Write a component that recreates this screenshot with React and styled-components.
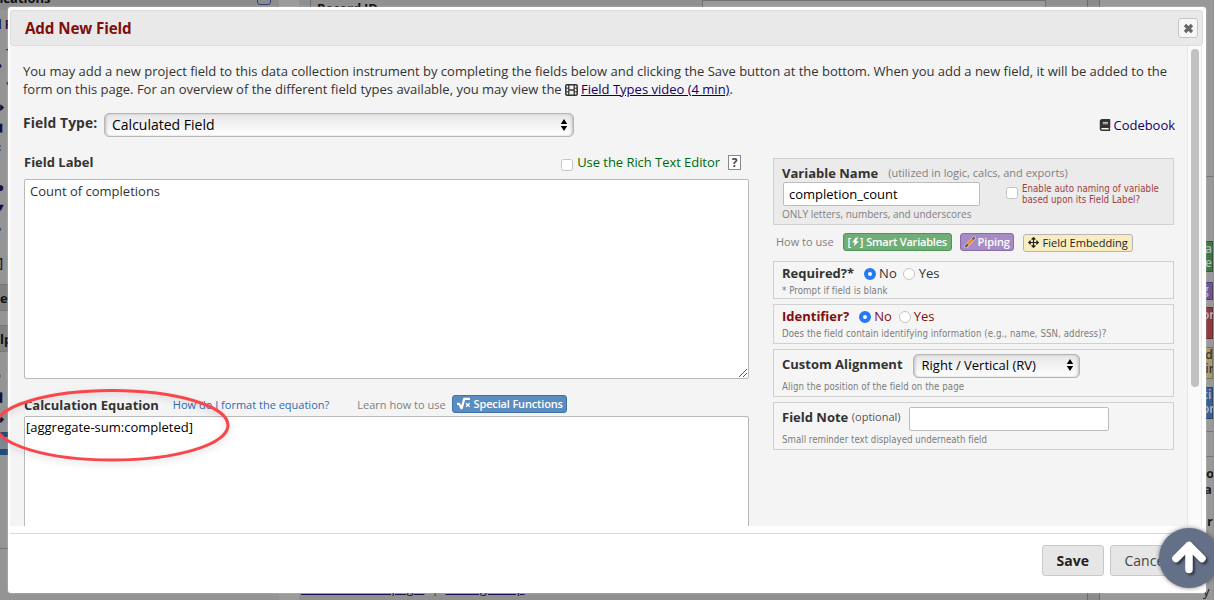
import React from "react";
import styled, { createGlobalStyle, css } from "styled-components";
import { FaBook, FaArrowsAlt, FaSquareRootAlt } from "react-icons/fa";

const Global = createGlobalStyle`
  * { box-sizing: border-box; }
  html, body { margin: 0; height: 600px; overflow: hidden; }
  body { font: 13px/18px "Open Sans", "Noto Sans", sans-serif; color: #333; background: #919191; }
`;

const Screen = styled.div`
  position: relative;
  width: 1214px;
  height: 600px;
  overflow: hidden;
`;

/* Dimmed page behind the dialog */
const Page = styled.div`
  display: flex;
  height: 600px;
  background: #909090;
`;
const Sidebar = styled.aside`
  width: 279px;
  height: 600px;
  overflow: hidden;
  display: flex;
  flex-direction: column;
  background: #949494;
`;
const SideTop = styled.div`
  display: flex;
  justify-content: space-between;
  height: 10px;
  padding-right: 8px;
  background: #8c8c8c;
  font-weight: 700;
  color: #111;
  line-height: 18px;
`;
const Applications = styled.span`
  margin: -11px 0 0 -30px;
`;
const Tick = styled.span`
  width: 14px;
  height: 14px;
  margin-top: -9px;
  border: 1px solid #3c3c80;
  border-radius: 3px;
`;
const SideItem = styled.div`
  height: ${(p) => p.$h}px;
  line-height: ${(p) => p.$h}px;
  margin-left: ${(p) => p.$left || 0}px;
  font-size: ${(p) => p.$size || 11}px;
  font-weight: 700;
  white-space: nowrap;
  color: ${(p) => p.$color || "#17103f"};
`;
const SideHeader = styled.div`
  height: 27px;
  margin-bottom: 14px;
  border: solid #777;
  border-width: 1px 0;
  background: #818181;
  color: #111;
  font-weight: 700;
  line-height: 26px;
`;
const SideBanner = styled.div`
  height: 23px;
  border: solid #244c78;
  border-width: 5px 0 6px;
  background: #7f8b99;
`;
const SideFoot = styled.div`
  height: 94px;
  border-bottom: 1px solid #777;
`;
const Gutter = styled.div`
  width: 20px;
  background: #9b9b9b;
`;
const PageMain = styled.main`
  width: 789px;
  padding-left: 11px;
  display: flex;
  flex-direction: column;
  justify-content: space-between;
`;
const RecordRow = styled.div`
  height: 12px;
  overflow: hidden;
  display: flex;
  justify-content: space-between;
  padding: 0 42px 0 6px;
  border-left: 1px solid #6a6a6a;
  color: #111;
  font-weight: 700;
  line-height: 16px;
  letter-spacing: -0.2px;
`;
const RecordInput = styled.span`
  width: 344px;
  height: 20px;
  border: 1px solid #707070;
  background: #999;
`;
const PageLinks = styled.div`
  display: flex;
  gap: 7px;
  height: 12px;
  overflow: hidden;
  line-height: 0;
  margin-left: -9px;
  a { color: #140b51; text-decoration: underline; }
`;
const RightCol = styled.aside`
  width: 126px;
  margin-left: -1px;
  border-left: 1px solid #6a6a6a;
  background: #999;
  display: flex;
`;
const RightStripe = styled.div`
  width: 12px;
  border-right: 1px solid #6a6a6a;
  background: #8c8c8c;
`;
const RightBody = styled.div`
  flex: 1;
  display: flex;
  flex-direction: column;
  overflow: hidden;
`;
const RightRule = styled.div`
  border-bottom: 1px solid #757575;
  height: ${(p) => p.$h}px;
`;
const RightTag = styled.div`
  margin: ${(p) => p.$gap}px 0 0 90px;
  padding-left: ${(p) => p.$pl || 11}px;
  height: ${(p) => p.$h}px;
  border: 1px solid rgba(0, 0, 0, 0.25);
  background: ${(p) => p.$bg};
  color: ${(p) => p.$color || "#b7b7b7"};
  font-size: 12px;
  font-weight: 600;
  line-height: 14px;
  white-space: pre;
`;
const RightText = styled.div`
  padding-left: ${(p) => p.$left}px;
  height: ${(p) => p.$h}px;
  color: #1b1b1b;
  font-weight: ${(p) => p.$weight || 700};
`;
const RightTexts = styled.div`
  padding-top: 7px;
`;

/* Dialog */
const Dialog = styled.section`
  position: absolute;
  left: 8px;
  top: 7px;
  width: 1198px;
  height: 586px;
  padding: 3px 2px;
  border-radius: 3px;
  background: #fff;
  box-shadow: 0 0 2px rgba(255, 255, 255, 0.5);
  display: flex;
  flex-direction: column;
`;
const TitleBar = styled.header`
  width: 1193px;
  height: 36px;
  padding: 0 4px 0 14px;
  display: flex;
  align-items: center;
  justify-content: space-between;
  border: 1px solid #dcdcdc;
  border-radius: 3px;
  background: #e9e9e9;
`;
const Title = styled.h1`
  margin: 0;
  font-size: 15.2px;
  line-height: 20px;
  font-weight: 700;
  letter-spacing: -0.12px;
  color: #7e0f0d;
`;
const Close = styled.button`
  width: 20px;
  height: 20px;
  padding: 0;
  display: grid;
  place-items: center;
  border: 1px solid #c5c5c5;
  border-radius: 3px;
  background: #f6f6f6;
`;
const Scroller = styled.div`
  display: flex;
  width: 1192px;
  height: 480px;
  overflow: hidden;
  border-right: 1px solid #e8e8e8;
`;
const Content = styled.div`
  width: 1177px;
  padding: 16px 13px 0;
  background: #f4f4f4;
`;
const Track = styled.div`
  width: 14px;
  padding: 3px 2px 0 3px;
  border-left: 1px solid #e8e8e8;
  background: #fafafa;
`;
const Thumb = styled.div`
  width: 8px;
  height: 338px;
  border-radius: 4px;
  background: #c1c1c1;
`;
const Intro = styled.p`
  margin: 0;
  width: 1155px;
  white-space: nowrap;
  letter-spacing: ${(p) => p.$ls || 0}px;
  svg { vertical-align: -1.5px; margin-right: 3px; }
`;
const Link = styled.a`
  color: #100066;
  text-decoration: ${(p) => (p.$plain ? "none" : "underline")};
`;
const TypeRow = styled.div`
  display: flex;
  align-items: flex-start;
  height: 55px;
  padding-top: 15px;
`;
const TypeLabel = styled.label`
  width: 81px;
  padding-top: 1px;
  font-size: 13.8px;
  letter-spacing: 0.1px;
  font-weight: 700;
  white-space: nowrap;
`;
const Select = styled.div`
  width: ${(p) => p.$w}px;
  height: 24px;
  margin: ${(p) => p.$m || 0};
  padding: ${(p) => p.$pad || "0 5px 1px 7px"};
  display: flex;
  align-items: center;
  justify-content: space-between;
  border: 1px solid #b5b5b5;
  border-radius: 5px;
  background: linear-gradient(#e6e6e6, #fff);
  box-shadow: inset 2px 0 3px -1px #bbb, inset -2px 0 3px -1px #bbb;
  color: #000;
  font-size: ${(p) => p.$size || 13}px;
  white-space: nowrap;
`;
const Codebook = styled.div`
  margin: 0 -1px 0 auto;
  padding-top: 3px;
  display: flex;
  align-items: center;
  gap: 3px;
  letter-spacing: -0.03px;
  svg { font-size: 12px; }
`;
const Columns = styled.div`
  display: flex;
  align-items: flex-start;
  justify-content: space-between;
  padding-left: 1px;
`;
const Left = styled.div`
  width: 725px;
`;
const Right = styled.div`
  width: 401px;
  padding-top: 5px;
`;
const LabelRow = styled.div`
  display: flex;
  height: 26px;
  line-height: 18px;
`;
const Strong = styled.b`
  font-weight: 700;
  white-space: nowrap;
`;
const Rich = styled.label`
  display: flex;
  margin-left: auto;
  gap: 4px;
  color: #006a0c;
  letter-spacing: -0.05px;
`;
const Help = styled.span`
  width: 13px;
  height: 15px;
  margin: 2px 8px 0 8px;
  border: 1px solid #888;
  background: #fff;
  color: #444;
  font-size: 12px;
  font-weight: 700;
  line-height: 13px;
  text-align: center;
`;
const Check = styled.span`
  flex: none;
  width: 12px;
  height: 12px;
  margin-top: ${(p) => p.$top || 0}px;
  border: 1px solid #c4c4c4;
  border-radius: 2.5px;
  background: #fff;
`;
const Area = styled.div`
  position: relative;
  height: ${(p) => p.$h}px;
  padding: ${(p) => p.$pad};
  border: 1px solid #b9b9b9;
  border-radius: 2px;
  background: #fff;
  color: ${(p) => p.$color || "#333"};
  line-height: 18px;
`;
const Grip = styled.svg`
  position: absolute;
  right: 1px;
  bottom: 1px;
`;
const CalcRow = styled.div`
  display: flex;
  height: 37px;
  padding-top: 17px;
`;
const Small = styled.span`
  font-size: ${(p) => p.$size || 11}px;
  color: ${(p) => p.$color || "#808080"};
  margin-left: ${(p) => p.$left || 0}px;
  white-space: nowrap;
`;
const Hint = styled.div`
  color: #808080;
  font-size: 10px;
  line-height: 14px;
  white-space: nowrap;
`;
const tones = {
  green: css`background: #6fae77; border-color: #4d9557; color: #fff;`,
  purple: css`background: #a68bc4; border-color: #8b6bb0; color: #fff;`,
  yellow: css`background: #f9edc0; border-color: #b5b5b5; color: #222;`,
  blue: css`background: #5b8cc0; border-color: #3f73ac; color: #fff;`,
};
const Tag = styled.button`
  flex: none;
  width: ${(p) => p.$w}px;
  height: 18px;
  margin: ${(p) => p.$m};
  padding: 0 0 1px;
  display: flex;
  align-items: center;
  justify-content: center;
  gap: ${(p) => p.$gap || 2}px;
  border: 1px solid;
  border-radius: 3px;
  font-family: inherit;
  font-size: 11px;
  font-weight: ${(p) => p.$weight || 600};
  line-height: 14px;
  letter-spacing: ${(p) => p.$ls || 0}px;
  white-space: nowrap;
  ${(p) => tones[p.$tone]}
`;
const Bracket = styled.span`
  display: flex;
  align-items: center;
  gap: 0;
  margin-right: 1px;
`;
const Box = styled.div`
  height: ${(p) => p.$h}px;
  margin-bottom: ${(p) => p.$mb}px;
  padding: ${(p) => p.$pt}px 8px 0;
  border: 1px solid #d0d0d0;
  background: ${(p) => p.$bg || "#f5f5f5"};
`;
const Row = styled.div`
  display: flex;
  height: ${(p) => p.$h}px;
  line-height: 18px;
  color: ${(p) => p.$color || "#333"};
`;
const Input = styled.div`
  width: ${(p) => p.$w}px;
  height: 24px;
  margin: ${(p) => p.$m};
  padding: 0 5px;
  border: 1px solid #bdbdbd;
  border-radius: 2px;
  background: #fff;
  color: #000;
  line-height: 23px;
`;
const Auto = styled.label`
  display: flex;
  gap: 4px;
  margin: 1px 0 0 26px;
`;
const Note = styled.div`
  font-family: "DejaVu Sans Condensed", "DejaVu Sans", sans-serif;
  font-stretch: condensed;
  font-size: 9.6px;
  line-height: ${(p) => p.$lh || 14}px;
  letter-spacing: ${(p) => p.$ls || 0.08}px;
  color: ${(p) => p.$color || "#7c7c7c"};
  white-space: nowrap;
`;
const Tags = styled.div`
  display: flex;
  height: 27px;
  padding-left: 3px;
  line-height: 16px;
`;
const Radio = styled.span`
  flex: none;
  width: 12px;
  height: 12px;
  margin: 4px ${(p) => p.$mr || 3}px 0 ${(p) => p.$ml}px;
  border-radius: 50%;
  border: ${(p) => (p.$on ? "4px solid #2479f5" : "1px solid #c4c4c4")};
  background: #fff;
`;
const Footer = styled.footer`
  width: 1193px;
  height: 53px;
  margin-top: 7px;
  padding: 11px 0 0 1032px;
  display: flex;
  gap: 6px;
  border-top: 1px solid #d8d8d8;
`;
const Button = styled.button`
  width: ${(p) => p.$w}px;
  height: 31px;
  flex: none;
  padding: 0 0 0 13.5px;
  text-align: left;
  border: 1px solid #c8c8c8;
  border-radius: 3px;
  background: #e6e6e6;
  color: ${(p) => (p.$bold ? "#222" : "#444")};
  font: ${(p) => (p.$bold ? 700 : 400)} 14px/28px "Open Sans", sans-serif;
`;
const ToTop = styled.button`
  position: absolute;
  left: 1159px;
  top: 528px;
  width: 60px;
  height: 60px;
  padding: 0 0 2px;
  display: grid;
  place-items: center;
  border: 0;
  border-radius: 50%;
  background: #647087;
  box-shadow: 0 0 4px rgba(0, 0, 0, 0.5);
  svg { filter: drop-shadow(2px 2px 1px rgba(0, 0, 0, 0.5)); }
`;
const Mark = styled.svg`
  position: absolute;
  left: 0;
  top: 380px;
  filter: drop-shadow(0 3px 3px rgba(0, 0, 0, 0.14));
`;

const Arrows = () => (
  <svg width="8" height="12" viewBox="0 0 8 12"><path d="M4 0 7.200 5H.8zM4 12 .8 7H7.200z" fill="#000" /></svg>
);
const Film = () => (
  <svg width="13" height="12" viewBox="0 0 13 12">
    <rect x=".8" y=".8" width="11.400" height="10.400" rx="1.200" fill="none" stroke="#333" strokeWidth="1.500" />
    <path d="M3.800 1V11M9.200 1V11M3.800 6H9.200" stroke="#333" strokeWidth="1.300" />
    <path d="M1 4.200H3.800M1 7.800H3.800M9.200 4.200H12M9.200 7.800H12" stroke="#333" strokeWidth="1" />
  </svg>
);
const Bolt = () => (
  <svg width="9" height="10" viewBox="0 0 9 10"><path d="M4.800 .5 1.200 5.600H3.800L2.600 9.500 7.900 4.200H5.300L7.200 .5z" fill="#fff" /></svg>
);
const Brush = () => (
  <svg width="12" height="12" viewBox="0 0 12 12">
    <path d="M2 10.500 10 2" stroke="#d9cbd0" strokeWidth="3.800" strokeLinecap="round" />
    <path d="M1.300 11 4 8.200M8.500 3.500 10.700 1.200" stroke="#6b4a50" strokeWidth="2" />
    <path d="M4 8.200 8.500 3.500" stroke="#f08a24" strokeWidth="2.600" />
  </svg>
);
const Up = () => (
  <svg width="34" height="33" viewBox="0 0 34 33">
    <path d="M17 4.500V28.500M4 17.500 17 4.500 30 17.500" fill="none" stroke="#fff" strokeWidth="7.500" strokeLinecap="round" strokeLinejoin="round" />
  </svg>
);

function BackPage() {
  return (
    <Page>
      <Sidebar>
        <SideTop><Applications>Applications</Applications><Tick /></SideTop>
        <SideItem $h={30} $left={-2} $size={12}>l F</SideItem>
        <SideItem $h={16} $left={6}>-</SideItem>
        <SideItem $h={20} $left={-3} $size={13}>•</SideItem>
        <SideItem $h={20} $left={6}>'</SideItem>
        <SideItem $h={21} $left={-5}>➔</SideItem>
        <SideItem $h={20} $left={-3}>▮</SideItem>
        <SideItem $h={20} $left={-2}>:</SideItem>
        <SideItem $h={20} />
        <SideItem $h={20} $left={-4} $size={14}>●</SideItem>
        <SideItem $h={20} $left={-5}>▼</SideItem>
        <SideItem $h={24} $left={-3}>•</SideItem>
        <SideItem $h={43} $left={-5} $color="#222" $size={15}>▯</SideItem>
        <SideHeader>e</SideHeader>
        <SideHeader>lp</SideHeader>
        <SideItem $h={20} $left={-4} $size={13}>•</SideItem>
        <SideItem $h={20} $left={-4} $size={13}>▮</SideItem>
        <SideItem $h={26} $left={-5}>➔</SideItem>
        <SideBanner />
        <SideFoot />
      </Sidebar>
      <Gutter />
      <PageMain>
        <RecordRow>Record ID<RecordInput /></RecordRow>
        <PageLinks><a>Download this page.</a> | <a>Manage map</a></PageLinks>
      </PageMain>
      <RightCol>
        <RightStripe />
        <RightBody>
          <RightRule $h={177} />
          <RightTag $gap={64} $h={31} $pl={14} $bg="#3e7545">{"ar\ne"}</RightTag>
          <RightTag $gap={10} $h={18} $bg="#6c5591">g</RightTag>
          <RightTag $gap={7} $h={32} $bg="#8c3a40">or</RightTag>
          <RightTag $gap={8} $h={32} $bg="#a39b72" $color="#333">{"ld\nlin"}</RightTag>
          <RightTag $gap={8} $h={32} $bg="#365f92">{"ci\non"}</RightTag>
          <RightRule $h={13} />
          <RightRule $h={25} />
          <RightTexts>
            <RightText $left={106} $h={16}>o</RightText>
            <RightText $left={104} $h={32}>a</RightText>
            <RightText $left={107} $h={70}>r</RightText>
            <RightText $left={103} $h={16} $weight={400}>y</RightText>
          </RightTexts>
        </RightBody>
      </RightCol>
    </Page>
  );
}

function VariableBox() {
  return (
    <Box $h={67} $mb={9} $pt={5} $bg="#ebebeb">
      <Row $h={18}>
        <Strong>Variable Name</Strong>
        <Small $left={10}>(utilized in logic, calcs, and exports)</Small>
      </Row>
      <Row $h={25}>
        <Input $w={197} $m="0 0 0 1px">completion_count</Input>
        <Auto>
          <Check $top={4} />
          <Note $lh={11} $ls={0.05} $color="#a04040">Enable auto naming of variable<br />based upon its Field Label?</Note>
        </Auto>
      </Row>
      <Hint>ONLY letters, numbers, and underscores</Hint>
    </Box>
  );
}

export default function App() {
  return (
    <Screen>
      <Global />
      <BackPage />
      <Dialog>
        <TitleBar>
          <Title>Add New Field</Title>
          <Close>
            <svg width="11" height="11" viewBox="0 0 11 11"><path d="M2 2 9 9M9 2 2 9" stroke="#666" strokeWidth="3.200" /></svg>
          </Close>
        </TitleBar>
        <Scroller>
          <Content>
            <Intro $ls={-0.007}>You may add a new project field to this data collection instrument by completing the fields below and clicking the Save button at the bottom. When you add a new field, it will be added to the</Intro>
            <Intro>form on this page. For an overview of the different field types available, you may view the <Film /><Link>Field Types video (4 min)</Link>.</Intro>
            <TypeRow>
              <TypeLabel>Field Type:</TypeLabel>
              <Select $w={470} $size={14}>Calculated Field<Arrows /></Select>
              <Codebook><FaBook /><Link $plain>Codebook</Link></Codebook>
            </TypeRow>
            <Columns>
              <Left>
                <LabelRow>
                  <Strong>Field Label</Strong>
                  <Rich><Check $top={6} />Use the Rich Text Editor</Rich>
                  <Help>?</Help>
                </LabelRow>
                <Area $h={200} $pad="2px 5px">
                  Count of completions
                  <Grip width="8" height="8" viewBox="0 0 8 8"><path d="M0 8 8 0M4 8 8 4" stroke="#555" /></Grip>
                </Area>
                <CalcRow>
                  <Strong>Calculation Equation</Strong>
                  <Small $left={14} $color="#2a6db5">How do I format the equation?</Small>
                  <Small $left={28}>Learn how to use</Small>
                  <Tag $tone="blue" $w={115} $gap={4} $ls={-0.15} $m="-1px 0 0 6.5px"><FaSquareRootAlt size={13} />Special Functions</Tag>
                </CalcRow>
                <Area $h={150} $pad="1px 1px" $color="#000">[aggregate-sum:completed]</Area>
              </Left>
              <Right>
                <VariableBox />
                <Tags>
                  <Small>How to use</Small>
                  <Tag $tone="green" $w={109} $ls={-0.22} $m="-1px 0 0 9px"><Bracket>[<Bolt />]</Bracket>Smart Variables</Tag>
                  <Tag $tone="purple" $w={54} $ls={-0.1} $m="-1px 0 0 8px"><Brush />Piping</Tag>
                  <Tag $tone="yellow" $w={110} $gap={4} $weight={400} $m="0 0 0 9px"><FaArrowsAlt size={11} />Field Embedding</Tag>
                </Tags>
                <Box $h={38} $mb={5} $pt={2}>
                  <Row $h={20}><Strong>Required?*</Strong><Radio $on $ml={10} />No<Radio $ml={6} $mr={4} />Yes</Row>
                  <Note>* Prompt if field is blank</Note>
                </Box>
                <Box $h={40} $mb={5} $pt={2}>
                  <Row $h={20} $color="#7e0f0d"><Strong>Identifier?</Strong><Radio $on $ml={10} />No<Radio $ml={7} />Yes</Row>
                  <Note>Does the field contain identifying information (e.g., name, SSN, address)?</Note>
                </Box>
                <Box $h={48} $mb={5} $pt={5}>
                  <Row $h={25}><Strong>Custom Alignment</Strong><Select $w={167} $m="-1px 0 0 10px" $pad="0 5px 2px 8px">Right / Vertical (RV)<Arrows /></Select></Row>
                  <Note $ls={0.06}>Align the position of the field on the page</Note>
                </Box>
                <Box $h={48} $mb={0} $pt={5}>
                  <Row $h={25}><Strong>Field Note</Strong><Small $left={3.5} $color="#555">(optional)</Small><Input $w={200} $m="-1px 0 0 8px" /></Row>
                  <Note $ls={0.02}>Small reminder text displayed underneath field</Note>
                </Box>
              </Right>
            </Columns>
          </Content>
          <Track><Thumb /></Track>
        </Scroller>
        <Footer>
          <Button $w={62} $bold>Save</Button>
          <Button $w={72}>Cancel</Button>
        </Footer>
      </Dialog>
      <Mark width="236" height="90" viewBox="0 380 236 90"><ellipse cx="112" cy="425.3" rx="116" ry="34.700" fill="none" stroke="#fa464b" strokeWidth="3" /></Mark>
      <ToTop><Up /></ToTop>
    </Screen>
  );
}
